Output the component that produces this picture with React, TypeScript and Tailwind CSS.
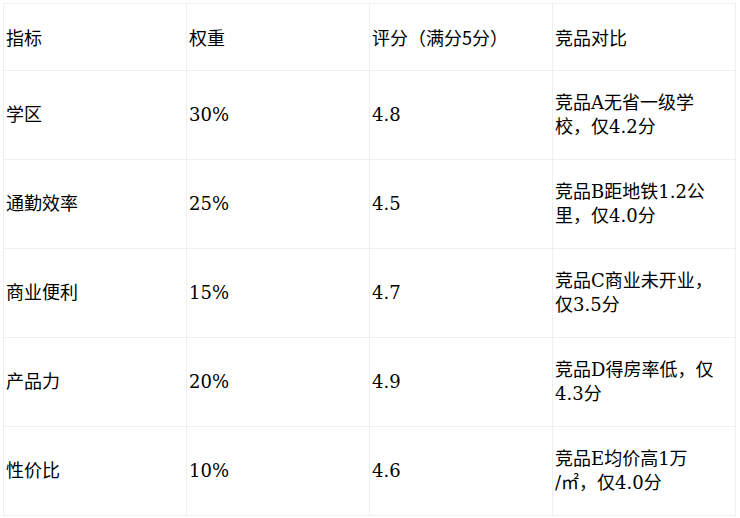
import type { ReactNode } from 'react'

const rows: { name: string; weight: string; score: string; compare: ReactNode }[] = [
  { name: '学区', weight: '30%', score: '4.8', compare: '竞品A无省一级学校，仅4.2分' },
  { name: '通勤效率', weight: '25%', score: '4.5', compare: '竞品B距地铁1.2公里，仅4.0分' },
  { name: '商业便利', weight: '15%', score: '4.7', compare: '竞品C商业未开业，仅3.5分' },
  { name: '产品力', weight: '20%', score: '4.9', compare: '竞品D得房率低，仅4.3分' },
  {
    name: '性价比',
    weight: '10%',
    score: '4.6',
    compare: (
      <>
        竞品E均价高1万
        <br />
        /㎡，仅4.0分
      </>
    ),
  },
]

const headers = ['指标', '权重', '评分（满分5分）', '竞品对比']

export default function App() {
  return (
    <div className="w-[740px] h-[518px] bg-white p-[3px] text-black">
      <table
        className="border-collapse table-fixed w-[733px] text-[18px] leading-[24px]"
        style={{ fontFamily: '"DejaVu Serif", "Noto Sans CJK SC", serif' }}
      >
        <thead>
          <tr className="h-[67px]">
            {headers.map((h) => (
              <th
                key={h}
                className="w-[183px] border border-[#efefef] pl-[2px] pr-[6px] text-left font-normal align-middle"
                style={{ fontFamily: '"Noto Sans CJK SC", sans-serif' }}
              >
                {h}
              </th>
            ))}
          </tr>
        </thead>
        <tbody>
          {rows.map((r) => (
            <tr key={r.name} className="h-[89px]">
              <td className="border border-[#efefef] pl-[2px] pr-[6px] align-middle">{r.name}</td>
              <td className="border border-[#efefef] pl-[2px] pr-[6px] align-middle">{r.weight}</td>
              <td className="border border-[#efefef] pl-[2px] pr-[6px] align-middle">{r.score}</td>
              <td className="border border-[#efefef] pl-[2px] pr-[6px] align-middle">{r.compare}</td>
            </tr>
          ))}
        </tbody>
      </table>
    </div>
  )
}
